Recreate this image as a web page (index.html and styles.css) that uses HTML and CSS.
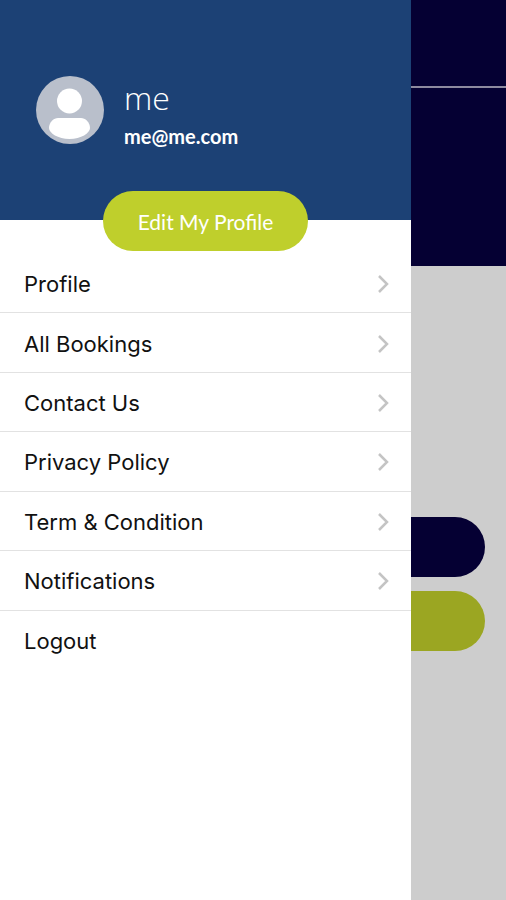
FILE: index.html
```html
<!DOCTYPE html>
<html lang="en">
<head>
    <meta charset="UTF-8">
    <meta name="viewport" content="width=device-width, initial-scale=1.0">
    <title>My Account</title>
    <link rel="stylesheet" href="styles.css">
</head>
<body>
<div class="screen">
    <aside class="drawer">
        <header class="profile">
            <div class="user">
                <svg class="avatar" viewBox="0 0 68 68" aria-hidden="true">
                    <circle cx="34" cy="34" r="34" fill="#b9bfcb"/>
                    <circle cx="33.5" cy="25" r="12.5" fill="#fff"/>
                    <path d="M22 42h23c4 0 9 4 9 10 0 5-9 11-20.500 11S13 57 13 52c0-6 5-10 9-10z" fill="#fff"/>
                </svg>
                <div>
                    <h1 class="name">me</h1>
                    <p class="email">me@me.com</p>
                </div>
            </div>
            <button type="button" class="edit">Edit My Profile</button>
        </header>
        <nav class="menu">
            <a href="#profile">Profile <svg class="chevron" viewBox="0 0 12 20"><path d="M2 2l8 8-8 8"/></svg></a>
            <a href="#bookings">All Bookings <svg class="chevron" viewBox="0 0 12 20"><path d="M2 2l8 8-8 8"/></svg></a>
            <a href="#contact">Contact Us <svg class="chevron" viewBox="0 0 12 20"><path d="M2 2l8 8-8 8"/></svg></a>
            <a href="#privacy">Privacy Policy <svg class="chevron" viewBox="0 0 12 20"><path d="M2 2l8 8-8 8"/></svg></a>
            <a href="#terms">Term &amp; Condition <svg class="chevron" viewBox="0 0 12 20"><path d="M2 2l8 8-8 8"/></svg></a>
            <a href="#notifications">Notifications <svg class="chevron" viewBox="0 0 12 20"><path d="M2 2l8 8-8 8"/></svg></a>
            <a href="#logout">Logout</a>
        </nav>
    </aside>
    <!-- Dimmed page behind the open drawer -->
    <main class="page">
        <div class="topbar"></div>
        <div class="banner"></div>
        <div class="actions">
            <button type="button" class="action" aria-label="Book"></button>
            <button type="button" class="action action-green" aria-label="View bookings"></button>
        </div>
    </main>
</div>
</body>
</html>
```

FILE: styles.css
```css
* {
    box-sizing: border-box;
}

body {
    margin: 0;
    font-family: Inter, "Liberation Sans", sans-serif;
    background-color: #cdcdcd;
}

.screen {
    display: grid;
    grid-template-columns: 411fr 95fr;
    min-height: 100vh;
}

.drawer {
    background: #fff;
}

.profile {
    display: flex;
    flex-direction: column;
    align-items: center;
    height: 220px;
    padding-top: 76px;
    background: #1c4175;
}

.user {
    display: flex;
    gap: 20px;
    width: 100%;
    padding-left: 36px;
    color: #fff;
    font-family: Lato, sans-serif;
}

.avatar {
    width: 68px;
    height: 68px;
}

.name {
    margin: 4px 0 0;
    font-family: "Open Sans", sans-serif;
    font-size: 32px;
    font-weight: 300;
    line-height: 36px;
}

.email {
    margin: 8px 0 0;
    font-size: 20px;
    font-weight: bold;
    line-height: 24px;
}

.edit {
    flex: none;
    width: 50%;
    height: 60px;
    margin-top: 43px;
    border: none;
    border-radius: 30px;
    background: #bfcf2c;
    color: #fff;
    font-family: Lato, sans-serif;
    font-size: 21px;
    cursor: pointer;
}

.menu {
    display: grid;
    grid-auto-rows: 1fr;
    min-height: 416px;
    margin-top: 34px;
}

.menu a {
    display: flex;
    align-items: center;
    justify-content: space-between;
    padding: 2px 22px 0 24px;
    border-bottom: 1px solid #e2e2e2;
    color: #111;
    font-size: 22px;
    text-decoration: none;
}

.menu a:last-child {
    border-bottom: none;
}

.chevron {
    width: 12px;
    height: 20px;
    fill: none;
    stroke: #c4c4c4;
    stroke-width: 2.5;
}

.page {
    background: #cdcdcd;
}

.topbar {
    height: 88px;
    border-bottom: 2px solid #8d8a9f;
    background: #050033;
}

.banner {
    height: 178px;
    background: #050033;
}

.actions {
    display: grid;
    gap: 14px;
    margin-top: 251px;
    padding-right: 21px;
}

.action {
    height: 60px;
    border: none;
    border-radius: 0 30px 30px 0;
    background: #050033;
}

.action-green {
    background: #9ba622;
}
```
